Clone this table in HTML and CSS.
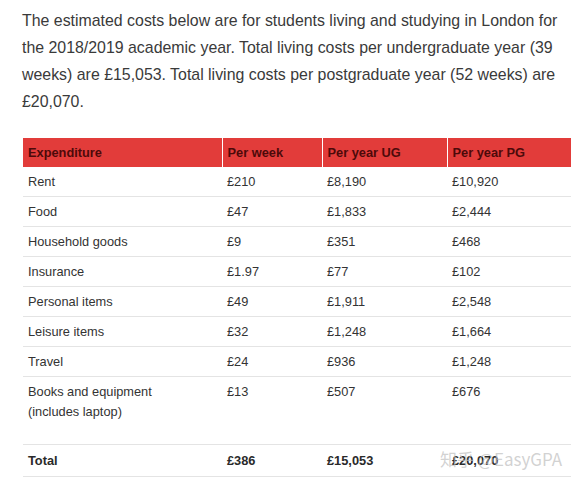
FILE: index.html
```html
<!DOCTYPE html>
<html>
<head>
<meta charset="utf-8">
<link rel="stylesheet" href="styles.css">
</head>
<body>
<div class="page">
  <p class="intro">The estimated costs below are for students living and studying in London for the 2018/2019 academic year. Total living costs per undergraduate year (39 weeks) are £15,053. Total living costs per postgraduate year (52 weeks) are £20,070.</p>
  <table class="costs">
    <colgroup>
      <col class="c1"><col class="c2"><col class="c3"><col class="c4">
    </colgroup>
    <thead>
      <tr><th>Expenditure</th><th>Per week</th><th>Per year UG</th><th>Per year PG</th></tr>
    </thead>
    <tbody>
      <tr><td>Rent</td><td>£210</td><td>£8,190</td><td>£10,920</td></tr>
      <tr><td>Food</td><td>£47</td><td>£1,833</td><td>£2,444</td></tr>
      <tr><td>Household goods</td><td>£9</td><td>£351</td><td>£468</td></tr>
      <tr><td>Insurance</td><td>£1.97</td><td>£77</td><td>£102</td></tr>
      <tr><td>Personal items</td><td>£49</td><td>£1,911</td><td>£2,548</td></tr>
      <tr><td>Leisure items</td><td>£32</td><td>£1,248</td><td>£1,664</td></tr>
      <tr><td>Travel</td><td>£24</td><td>£936</td><td>£1,248</td></tr>
      <tr class="tall"><td>Books and equipment<br>(includes laptop)</td><td>£13</td><td>£507</td><td>£676</td></tr>
      <tr class="total"><td>Total</td><td>£386</td><td>£15,053</td><td>£20,070</td></tr>
    </tbody>
  </table>
  <div class="watermark">知乎 @EasyGPA</div>
</div>
</body>
</html>
```

FILE: styles.css
```css
html, body {
  margin: 0;
  padding: 0;
  background: #ffffff;
}
.page {
  position: relative;
  padding: 7px 13px 0 22px;
  font-family: "Liberation Sans", Arial, sans-serif;
  color: #333333;
}
.intro {
  margin: 0 0 23px 0;
  font-size: 15.9px;
  line-height: 27px;
  color: #3a3a3a;
}
.costs {
  width: 548px;
  margin-left: 1px;
  border-collapse: collapse;
  table-layout: fixed;
  font-size: 12.8px;
  color: #333333;
}
.c1 { width: 199px; }
.c2 { width: 100px; }
.c3 { width: 125px; }
.c4 { width: 124px; }
.costs th {
  background: #e23c3a;
  color: #4d0a0a;
  font-weight: bold;
  text-align: left;
  height: 29px;
  padding: 0 5px;
  border-left: 1px solid #ffffff;
  vertical-align: middle;
}
.costs th:first-child {
  border-left: none;
}
.costs td {
  text-align: left;
  vertical-align: top;
  padding: 5px 5px 4px 5px;
  line-height: 20px;
  border-bottom: 1px solid #e4e4e4;
}
.costs tr.tall td {
  padding-bottom: 22px;
}
.costs tr.total td {
  font-weight: bold;
  padding-top: 6px;
  padding-bottom: 5px;
  color: #2a2a2a;
}
.watermark {
  position: absolute;
  left: 440px;
  top: 448px;
  font-family: "Noto Sans CJK SC", "Liberation Sans", sans-serif;
  font-size: 17px;
  line-height: 22px;
  color: rgba(190, 190, 190, 0.7);
  pointer-events: none;
}
```
